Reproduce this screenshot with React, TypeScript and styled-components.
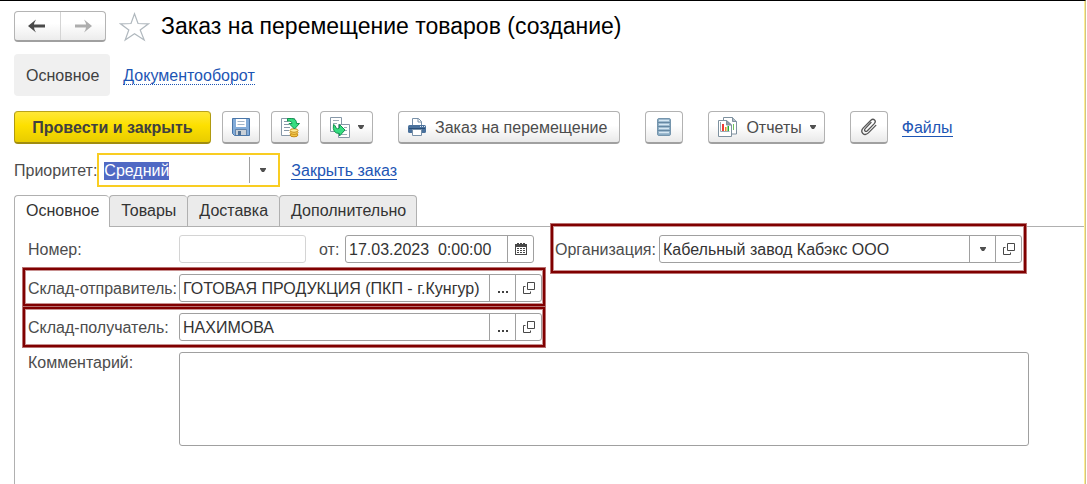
import React, { useEffect, useRef } from "react";
import styled, { createGlobalStyle, css } from "styled-components";

const GlobalStyle = createGlobalStyle`
  *, *::before, *::after { box-sizing: border-box; }
  body {
    margin: 0;
    background: #fff;
    color: #4c4c4c;
    font: 16px/18px "Liberation Sans", Arial, sans-serif;
  }
  button, input, textarea { font: inherit; color: inherit; margin: 0; }
`;

const Page = styled.div`
  display: flex;
  flex-direction: column;
  min-height: 100vh;
  margin-right: 1px;
  padding: 10px 0 0 14px;
  border-top: 1px solid #000;
  border-right: 1px solid #cfc387;
  box-shadow: inset -1px 0 #ffee90;
`;

const Header = styled.header`
  display: flex;
  align-items: center;
  height: 31px;
`;

const History = styled.div`
  display: flex;
  width: 92px;
  height: 31px;
  border: 1px solid #b4b4b4;
  border-bottom: 2px solid #a0a0a0;
  border-radius: 4px;
  background: linear-gradient(#fff 40%, #ececec);
`;

const HistoryButton = styled.button`
  flex: 1;
  display: flex;
  align-items: center;
  justify-content: center;
  padding: 0;
  border: 0;
  background: none;
  & + & { border-left: 1px solid #d4d4d4; }
`;

const StarButton = styled.button`
  display: flex;
  margin: 0 11px 0 13px;
  padding: 0;
  border: 0;
  background: none;
`;

const Title = styled.h1`
  margin: 0;
  padding-bottom: 2px;
  color: #000;
  font-size: 23px;
  line-height: 28px;
  font-weight: 400;
`;

const Sections = styled.nav`
  display: flex;
  align-items: center;
  gap: 13px;
  margin-top: 12px;
`;

const CurrentSection = styled.span`
  padding: 13px 11px 11px 12px;
  border-radius: 4px;
  background: #f0f0f0;
  color: #404040;
`;

const Link = styled.a<{ $dotted?: boolean }>`
  padding-top: 2px;
  border-bottom: 1px ${(p) => (p.$dotted ? "dotted" : "solid")} #1d55b4;
  color: #1d55b4;
  line-height: 16px;
  text-decoration: none;
`;

const Toolbar = styled.div`
  display: flex;
  align-items: center;
  gap: 25px;
  margin-top: 15px;
`;

const ToolGroup = styled.div<{ $gap: number }>`
  display: flex;
  align-items: center;
  gap: ${(p) => p.$gap}px;
`;

const ToolButton = styled.button<{ $primary?: boolean; $label?: boolean }>`
  display: flex;
  align-items: center;
  justify-content: center;
  gap: 8px;
  min-width: 38px;
  height: 33px;
  padding: 0 ${(p) => (p.$label ? 8 : 7)}px;
  border: 1px solid #b2b2b2;
  border-bottom: 2px solid #a0a0a0;
  border-radius: 4px;
  background: linear-gradient(#fff 45%, #e9e9e9);
  white-space: nowrap;
  ${(p) =>
    p.$primary &&
    css`
      width: 197px;
      border-color: #b9a31a #b09a10 #a08c10;
      background: linear-gradient(#ffe838, #fde000 45%, #e8cc00);
      color: #404040;
      font-weight: 700;
    `}
`;

const ButtonText = styled.span<{ $wide?: boolean }>`
  padding: 2px ${(p) => (p.$wide ? 4 : 0)}px 0 0;
`;

const PriorityRow = styled.div`
  display: flex;
  align-items: center;
  margin-top: 9px;
`;

const PriorityBox = styled.div`
  display: flex;
  align-items: center;
  width: 183px;
  height: 34px;
  margin-right: 11px;
  border: 2px solid #f9cd22;
`;

const PriorityInput = styled.input`
  flex: 1;
  min-width: 0;
  height: 26px;
  padding: 2px 5px 0;
  border: 0;
  outline: 0;
  background: none;
  &::selection { background: #5069c4; color: #fff; }
`;

const PriorityToggle = styled.button`
  display: flex;
  align-items: center;
  justify-content: center;
  width: 29px;
  height: 26px;
  padding: 0 3px 0 0;
  border: 0;
  border-left: 1px solid #a0a0a0;
  background: none;
`;

const Tabs = styled.div`
  display: flex;
  height: 31px;
  margin-top: 8px;
`;

const Tab = styled.button<{ $active?: boolean }>`
  height: ${(p) => (p.$active ? 32 : 31)}px;
  padding: 0 11px ${(p) => (p.$active ? 1 : 0)}px;
  border: 1px solid #b0b0b0;
  border-right-width: 0;
  border-bottom: 0;
  border-radius: 4px 4px 0 0;
  background: ${(p) => (p.$active ? "#fff" : "#ebebeb")};
  color: #333;
  z-index: ${(p) => (p.$active ? 1 : 0)};
  &:first-child { padding-right: 10px; }
  &:last-child { padding-right: 10px; border-right-width: 1px; }
`;

const Panel = styled.form`
  flex: 1;
  display: flex;
  flex-direction: column;
  gap: 11px;
  margin-right: 1px;
  padding: 8px 55px 38px 13px;
  border: solid #b0b0b0;
  border-width: 1px 0 0 1px;
`;

const Columns = styled.div`
  display: grid;
  grid-template-columns: minmax(0, 514fr) minmax(0, 467fr);
  gap: 13px;
  padding-right: 7px;
`;

const Column = styled.div`
  display: flex;
  flex-direction: column;
  gap: 11px;
`;

const Row = styled.div<{ $label: number; $top?: boolean }>`
  position: relative;
  display: grid;
  grid-template-columns: ${(p) => p.$label}px minmax(0, 1fr);
  align-items: ${(p) => (p.$top ? "start" : "center")};
`;

/* Dark red outline that draws attention to a row without affecting its layout. */
const Marked = styled(Row)<{ $outset: string }>`
  &::after {
    content: "";
    position: absolute;
    inset: ${(p) => p.$outset};
    border: 2px solid #800000;
    box-shadow: 0 0 0 1px #b87070, inset 0 0 0 1px #c89090;
    pointer-events: none;
  }
`;

const Label = styled.label`
  padding-top: 2px;
  white-space: nowrap;
`;

const NumberLine = styled.div`
  display: grid;
  grid-template-columns: 127px 39px minmax(0, 1fr);
  align-items: center;
  padding-right: 8px;
`;

const DateLabel = styled(Label)`
  padding-left: 13px;
`;

const Field = styled.div<{ $muted?: boolean }>`
  display: flex;
  height: 28px;
  border: 1px solid ${(p) => (p.$muted ? "#d4d4d4" : "#a0a0a0")};
  border-radius: 3px;
`;

const FieldInput = styled.input`
  flex: 1;
  min-width: 0;
  padding: 2px 3px 0;
  border: 0;
  outline: 0;
  background: none;
  color: #333;
`;

const FieldButton = styled.button`
  display: flex;
  align-items: center;
  justify-content: center;
  width: 26px;
  padding: 0;
  border: 0;
  border-left: 1px solid #a0a0a0;
  background: none;
  color: #333;
`;

const Comment = styled.textarea`
  display: block;
  width: 100%;
  height: 94px;
  padding: 4px;
  border: 1px solid #a0a0a0;
  border-radius: 3px;
  outline: 0;
  resize: none;
`;

const ArrowIcon = ({ color, flip }: { color: string; flip?: boolean }) => (
  <svg width="18" height="14" viewBox="0 0 18 14" aria-hidden="true">
    <path
      d={flip ? "M18 7 10 .5Q12 4 12 5.500H1v3h11Q12 10 10 13.500Z" : "M0 7 8 .5Q6 4 6 5.500h11v3H6Q6 10 8 13.500Z"}
      fill={color}
    />
  </svg>
);

const StarIcon = () => (
  <svg width="31" height="30" viewBox="0 0 31 30" aria-hidden="true">
    <path
      d="M15.5 1.8 19 11.5 29.5 11.8 21.2 18 25.2 28 15.5 21.8 6.2 28 9.8 18 1.5 11.8 12 11.5Z"
      fill="#fff"
      stroke="#b0b8be"
      strokeWidth="1.200"
    />
  </svg>
);

const Caret = () => (
  <svg width="6" height="4" viewBox="0 0 6 4" aria-hidden="true">
    <path d="M0 0h6v1L4 4H2L0 1Z" fill="#505050" />
  </svg>
);

const SaveIcon = () => (
  <svg width="18" height="18" viewBox="0 0 18 18" aria-hidden="true">
    <path d="M.5.5h17v17h-15l-2-2Z" fill="#83acd9" stroke="#4a76a8" />
    <path d="M4 1h10v8H4Z" fill="#fff" />
    <path d="M5.5 3.5h7M5.5 6.5h7" stroke="#a4b6c8" />
    <path d="M4 12h10v5H4Z" fill="#c9d0d7" />
    <path d="M3.5 17v-5.5h11V17" fill="none" stroke="#6484a8" />
    <path d="M6 13h3v4H6Z" fill="#4f6f92" />
  </svg>
);

const PostIcon = () => (
  <svg width="20" height="21" viewBox="0 0 20 21" aria-hidden="true">
    <path d="M1.5 1.5h13v17h-13Z" fill="#fff" stroke="#8798a8" />
    <path d="M4 4.500h4M4 7.500h5M4 10.500h6M4 13.500h5" stroke="#8798a8" />
    <ellipse cx="14" cy="18" rx="4" ry="1.800" fill="#f2c443" stroke="#c58b17" />
    <ellipse cx="14" cy="15.500" rx="4" ry="1.800" fill="#ffdc67" stroke="#c58b17" />
    <ellipse cx="14" cy="13.500" rx="4" ry="1.800" fill="#ffeb98" stroke="#c58b17" />
    <path d="M7.500 1.500h4q5 0 5 5h3l-5 5.500-5.500-5.500h3q0-2.500-4.500-2.500Z" fill="#35dd80" stroke="#14934f" />
  </svg>
);

const CreateFromIcon = () => (
  <svg width="21" height="21" viewBox="0 0 21 21" aria-hidden="true">
    <path d="M1.500.500h11v14h-11Z" fill="#fff" stroke="#8798a8" />
    <path d="M4 3.500h6M4 6.500h4" stroke="#9baab7" />
    <path d="M9.500 7.500h11v13h-11Z" fill="#fff" stroke="#8798a8" />
    <path d="M15 10.500h3M16 13.500h2M12 17.500h6" stroke="#9baab7" />
    <path d="M4.500 7.500q2 .5 2.500 3.500 1.500 1.500 3.500 0V7.500l5.500 5.500-5.500 6v-2.500Q3 16.500 4.500 7.500Z" fill="#35dd80" stroke="#14934f" />
  </svg>
);

const PrintIcon = () => (
  <svg width="20" height="18" viewBox="0 0 20 18" aria-hidden="true">
    <path d="M5.500 8V.500h6l3 3V8" fill="#fff" stroke="#7890a8" />
    <path d="M11 .500v3.500h3.500" fill="none" stroke="#7890a8" />
    <rect x="1" y="7" width="18" height="8" rx="1.500" fill="#4a719c" />
    <path d="M2 10.500h16" stroke="#284e78" />
    <path d="M13 8.500h1M15 8.500h1M17 8.500h1" stroke="#d9e5f1" />
    <path d="M5.500 11.500h9v6h-9Z" fill="#fff" stroke="#7890a8" />
  </svg>
);

const ListIcon = () => (
  <svg width="14" height="18" viewBox="0 0 14 18" aria-hidden="true">
    <rect x=".5" y=".5" width="13" height="17" rx="1.500" fill="#8cadc4" stroke="#7595ad" />
    <path d="M2 2.500h10M2 6.500h10M2 10.500h10M2 14.500h10" stroke="#d6e7f2" strokeWidth="1.500" />
    <path d="M1 4.500h12M1 8.500h12M1 12.500h12" stroke="#6588a3" />
  </svg>
);

const ReportIcon = () => (
  <svg width="21" height="20" viewBox="0 0 21 20" aria-hidden="true">
    <path d="M6.500.500h9l4 4v12.500h-13Z" fill="#fff" stroke="#7e919f" />
    <path d="M15.500.500v4h4" fill="#aebbc4" stroke="#7e919f" />
    <path d="M16 7h1v6h-1Z" fill="#6fc45a" />
    <path d="M1.500 3.500h8l5 4.500v11.500h-13Z" fill="#fff" stroke="#7e919f" />
    <path d="M9.500 3.500V8h5Z" fill="#8d9ba5" stroke="#7e919f" />
    <path d="M3.500 5v9.500h9" fill="none" stroke="#9aa9b4" />
    <path d="M5 7h2v7H5Z" fill="#ed3b35" />
    <path d="M8 10h1.500v4H8Z" fill="#e78b20" />
    <path d="M10.500 9h1.500v5h-1.500Z" fill="#28ad32" />
  </svg>
);

const ClipIcon = () => (
  <svg width="18" height="18" viewBox="0 0 18 18" aria-hidden="true">
    <path
      d="M11 4.500 5.200 10.600C3.600 12.400 5.600 14.400 7.400 12.700L14.300 5.600C16.800 2.800 13.600-.2 10.900 2.200L3.300 9.900C-.6 14.100 4.300 18.800 8.400 14.900L15.800 7.400"
      fill="none"
      stroke="#555"
      strokeWidth="1.300"
      strokeLinecap="round"
    />
  </svg>
);

const CalendarIcon = () => (
  <svg width="12" height="12" viewBox="0 0 12 12" aria-hidden="true">
    <path d="M0 1h2V0h2v1h1V0h2v1h1V0h2v1h2v11H0Z" fill="#484848" />
    <path d="M1 4h10v7H1Z" fill="#fff" />
    <path d="M2 5.500h8M2 7.500h8M2 9.500h8" stroke="#484848" strokeDasharray="2 1" />
  </svg>
);

const OpenIcon = () => (
  <svg width="12" height="12" viewBox="0 0 12 12" aria-hidden="true">
    <path d="M4.500.500h7v7h-7ZM2.500 4.500h-2v7h7v-2" fill="none" stroke="#484848" />
  </svg>
);

const DotsIcon = () => (
  <svg width="12" height="10" viewBox="0 0 12 10" aria-hidden="true">
    <path d="M1 8h2v2H1ZM5 8h2v2H5ZM9 8h2v2H9Z" fill="#404040" />
  </svg>
);

const ReferenceField = ({ id, value, list }: { id: string; value: string; list?: boolean }) => (
  <Field>
    <FieldInput id={id} defaultValue={value} />
    <FieldButton type="button" aria-label="Выбрать">{list ? <Caret /> : <DotsIcon />}</FieldButton>
    <FieldButton type="button" aria-label="Открыть"><OpenIcon /></FieldButton>
  </Field>
);

export default function App() {
  const priority = useRef<HTMLInputElement>(null);

  useEffect(() => {
    priority.current?.focus();
    priority.current?.select();
  }, []);

  return (
    <>
      <GlobalStyle />
      <Page>
        <Header>
          <History>
            <HistoryButton aria-label="Назад"><ArrowIcon color="#4a4a4a" /></HistoryButton>
            <HistoryButton aria-label="Вперед"><ArrowIcon color="#adadad" flip /></HistoryButton>
          </History>
          <StarButton aria-label="В избранное"><StarIcon /></StarButton>
          <Title>Заказ на перемещение товаров (создание)</Title>
        </Header>

        <Sections>
          <CurrentSection>Основное</CurrentSection>
          <Link href="#flow" $dotted>Документооборот</Link>
        </Sections>

        <Toolbar>
          <ToolGroup $gap={11}>
            <ToolButton $primary><ButtonText>Провести и закрыть</ButtonText></ToolButton>
            <ToolButton aria-label="Записать"><SaveIcon /></ToolButton>
            <ToolButton aria-label="Провести"><PostIcon /></ToolButton>
            <ToolButton aria-label="Создать на основании" $label><CreateFromIcon /><Caret /></ToolButton>
          </ToolGroup>
          <ToolButton $label><PrintIcon /><ButtonText $wide>Заказ на перемещение</ButtonText></ToolButton>
          <ToolButton aria-label="Список"><ListIcon /></ToolButton>
          <ToolButton $label><ReportIcon /><ButtonText>Отчеты</ButtonText><Caret /></ToolButton>
          <ToolGroup $gap={14}>
            <ToolButton aria-label="Прикрепить"><ClipIcon /></ToolButton>
            <Link href="#files">Файлы</Link>
          </ToolGroup>
        </Toolbar>

        <PriorityRow>
          <Label htmlFor="priority">Приоритет:</Label>
          <PriorityBox>
            <PriorityInput id="priority" ref={priority} defaultValue="Средний" />
            <PriorityToggle aria-label="Выбрать приоритет"><Caret /></PriorityToggle>
          </PriorityBox>
          <Link href="#close">Закрыть заказ</Link>
        </PriorityRow>

        <Tabs role="tablist">
          <Tab role="tab" aria-selected="true" $active>Основное</Tab>
          <Tab role="tab" aria-selected="false">Товары</Tab>
          <Tab role="tab" aria-selected="false">Доставка</Tab>
          <Tab role="tab" aria-selected="false">Дополнительно</Tab>
        </Tabs>

        <Panel>
          <Columns>
            <Column>
              <Row $label={151}>
                <Label htmlFor="number">Номер:</Label>
                <NumberLine>
                  <Field $muted><FieldInput id="number" /></Field>
                  <DateLabel htmlFor="date">от:</DateLabel>
                  <Field>
                    <FieldInput id="date" defaultValue="17.03.2023  0:00:00" />
                    <FieldButton type="button" aria-label="Календарь"><CalendarIcon /></FieldButton>
                  </Field>
                </NumberLine>
              </Row>
              <Marked $label={151} $outset="-6px -3px -4px -5px">
                <Label htmlFor="sender">Склад-отправитель:</Label>
                <ReferenceField id="sender" value="ГОТОВАЯ ПРОДУКЦИЯ (ПКП - г.Кунгур)" />
              </Marked>
              <Marked $label={151} $outset="-6px -3px -6px -5px">
                <Label htmlFor="receiver">Склад-получатель:</Label>
                <ReferenceField id="receiver" value="НАХИМОВА" />
              </Marked>
            </Column>
            <Column>
              <Marked $label={104} $outset="-11px -4px -10px -4px">
                <Label htmlFor="company">Организация:</Label>
                <ReferenceField id="company" value="Кабельный завод Кабэкс ООО" list />
              </Marked>
            </Column>
          </Columns>
          <Row $label={151} $top>
            <Label htmlFor="comment">Комментарий:</Label>
            <Comment id="comment" />
          </Row>
        </Panel>
      </Page>
    </>
  );
}
